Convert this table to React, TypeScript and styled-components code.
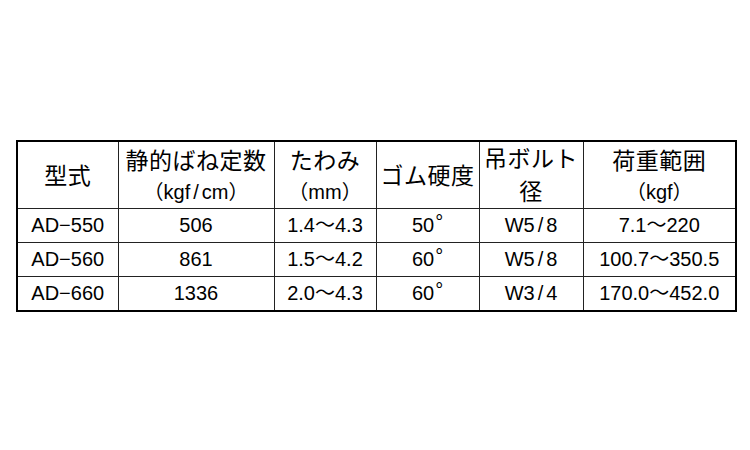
import styled, { createGlobalStyle } from "styled-components";
import { Fragment } from "react";

const GlobalStyle = createGlobalStyle`
  body {
    margin: 0;
    background: #ffffff;
    font-family: "Liberation Sans", "Noto Sans CJK JP", sans-serif;
    color: #000;
  }
`;

const Page = styled.div`
  padding: 140px 0 0 16px;
`;

const Table = styled.table`
  border-collapse: collapse;
  table-layout: fixed;
  width: 719px;
  border: 2px solid #000;
  font-size: 20px;
`;

const Cell = styled.td<{ $head?: boolean }>`
  border: 1px solid #222;
  text-align: center;
  vertical-align: middle;
  padding: 0;
  font-weight: normal;
  height: ${(p) => (p.$head ? "66px" : "33px")};
  line-height: ${(p) => (p.$head ? "30px" : "33px")};
  white-space: nowrap;
`;

const Jp = styled.span`
  font-family: "Noto Sans CJK JP", sans-serif;
  font-size: 23px;
  letter-spacing: 0.5px;
`;

const Slash = styled.span`
  margin: 0 3px;
`;

const Deg = styled.span`
  position: relative;
  top: -3px;
  margin-left: 1px;
`;

const widths = [101, 156, 102, 103, 104, 153];

const heads: string[][] = [
  ["型式"],
  ["静的ばね定数", "（kgf/cm）"],
  ["たわみ", "（mm）"],
  ["ゴム硬度"],
  ["吊ボルト", "径"],
  ["荷重範囲", "（kgf）"],
];

const rows = [
  ["AD−550", "506", "1.4〜4.3", "50°", "W5/8", "7.1〜220"],
  ["AD−560", "861", "1.5〜4.2", "60°", "W5/8", "100.7〜350.5"],
  ["AD−660", "1336", "2.0〜4.3", "60°", "W3/4", "170.0〜452.0"],
];

// spread out slashes and raise degree marks like the original gothic font
function Text({ value }: { value: string }) {
  const parts = value.split(/([/°])/);
  return (
    <>
      {parts.map((p, i) =>
        p === "/" ? (
          <Slash key={i}>/</Slash>
        ) : p === "°" ? (
          <Deg key={i}>°</Deg>
        ) : (
          <Fragment key={i}>{p}</Fragment>
        )
      )}
    </>
  );
}

function Head({ lines }: { lines: string[] }) {
  return (
    <Cell as="th" $head>
      {lines.map((l, i) => (
        <div key={i}>{l.startsWith("（") ? <Text value={l} /> : <Jp>{l}</Jp>}</div>
      ))}
    </Cell>
  );
}

export default function App() {
  return (
    <>
      <GlobalStyle />
      <Page>
        <Table>
          <colgroup>
            {widths.map((w, i) => (
              <col key={i} style={{ width: w }} />
            ))}
          </colgroup>
          <thead>
            <tr>
              {heads.map((h, i) => (
                <Head key={i} lines={h} />
              ))}
            </tr>
          </thead>
          <tbody>
            {rows.map((r, i) => (
              <tr key={i}>
                {r.map((c, j) => (
                  <Cell key={j}>
                    <Text value={c} />
                  </Cell>
                ))}
              </tr>
            ))}
          </tbody>
        </Table>
      </Page>
    </>
  );
}
